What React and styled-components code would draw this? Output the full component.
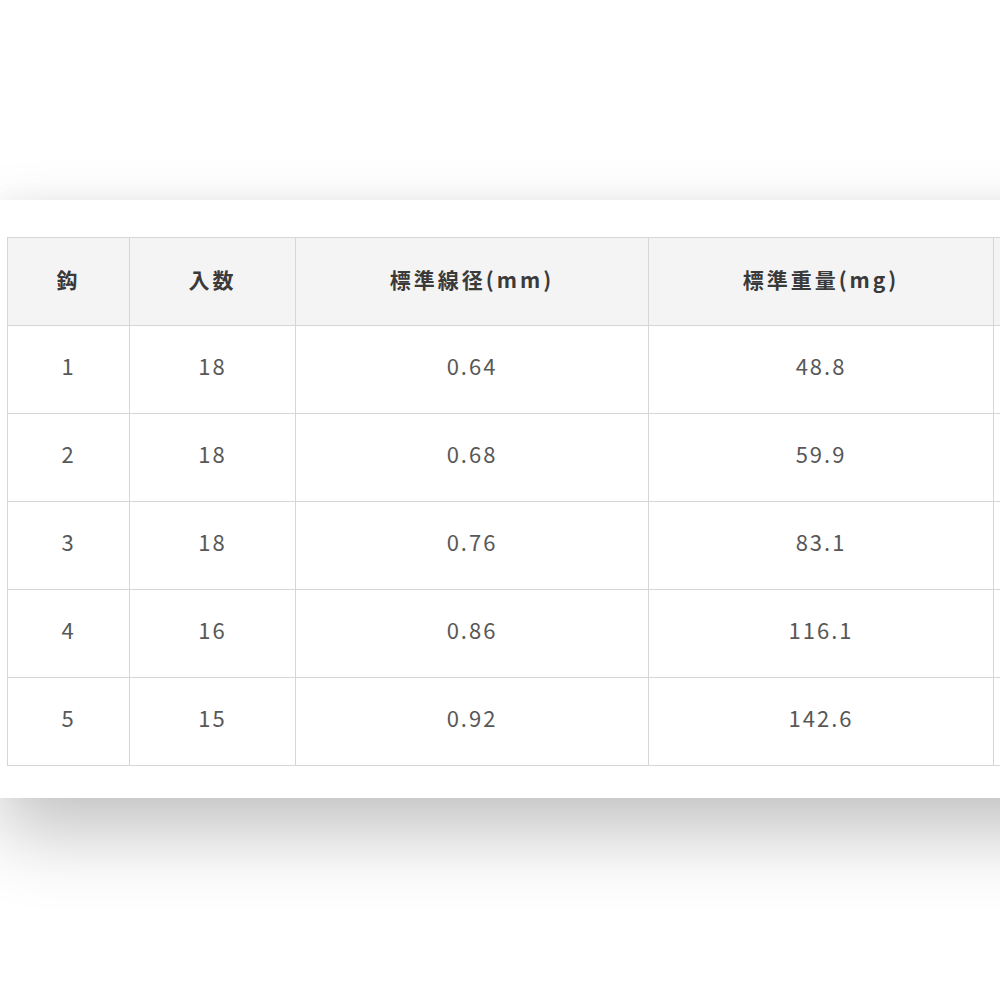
import React from 'react';
import styled, { createGlobalStyle } from 'styled-components';

const GlobalStyle = createGlobalStyle`
    html, body {
        margin: 0;
        padding: 0;
        background: #ffffff;
        overflow: hidden;
    }
    body {
        font-family: "Noto Sans CJK JP", "Noto Sans", sans-serif;
    }
`;

const Page = styled.main`
    width: 1000px;
    height: 1000px;
    padding-top: 200px;
    box-sizing: border-box;
`;

const Card = styled.section`
    width: 1200px;
    background: #ffffff;
    padding: 37px 0 32px 7px;
    box-sizing: border-box;
    box-shadow: 0 35px 70px rgba(0, 0, 0, 0.24), 0 -6px 18px rgba(0, 0, 0, 0.03);
`;

const Table = styled.table`
    border-collapse: collapse;
    table-layout: fixed;
    width: 1150px;
`;

const HeadCell = styled.th`
    height: 88px;
    padding: 0 0 5px;
    box-sizing: border-box;
    background: #f4f4f4;
    border: 1px solid #d6d6d6;
    border-bottom: none;
    color: #3a3a3a;
    font-size: 21px;
    font-weight: 700;
    letter-spacing: 3px;
    text-align: center;
    vertical-align: middle;
`;

const Cell = styled.td`
    height: 88px;
    padding: 0 0 9px;
    box-sizing: border-box;
    border: 1px solid #d6d6d6;
    color: #585858;
    font-size: 22px;
    font-weight: 400;
    letter-spacing: 2px;
    text-align: center;
    vertical-align: middle;
`;

const columns = [
    { label: '鈎', width: 122 },
    { label: '入数', width: 166 },
    { label: '標準線径(mm)', width: 353 },
    { label: '標準重量(mg)', width: 345 },
    { label: '', width: 164 },
];

const rows = [
    ['1', '18', '0.64', '48.8', ''],
    ['2', '18', '0.68', '59.9', ''],
    ['3', '18', '0.76', '83.1', ''],
    ['4', '16', '0.86', '116.1', ''],
    ['5', '15', '0.92', '142.6', ''],
];

const App = () => {
    return (
        <Page>
            <GlobalStyle />
            <Card>
                <Table>
                    <colgroup>
                        {columns.map((c, i) => (
                            <col key={i} style={{ width: c.width }} />
                        ))}
                    </colgroup>
                    <thead>
                        <tr>
                            {columns.map((c, i) => (
                                <HeadCell key={i}>{c.label}</HeadCell>
                            ))}
                        </tr>
                    </thead>
                    <tbody>
                        {rows.map((r, i) => (
                            <tr key={i}>
                                {r.map((v, j) => (
                                    <Cell key={j}>{v}</Cell>
                                ))}
                            </tr>
                        ))}
                    </tbody>
                </Table>
            </Card>
        </Page>
    );
};

export default App;
